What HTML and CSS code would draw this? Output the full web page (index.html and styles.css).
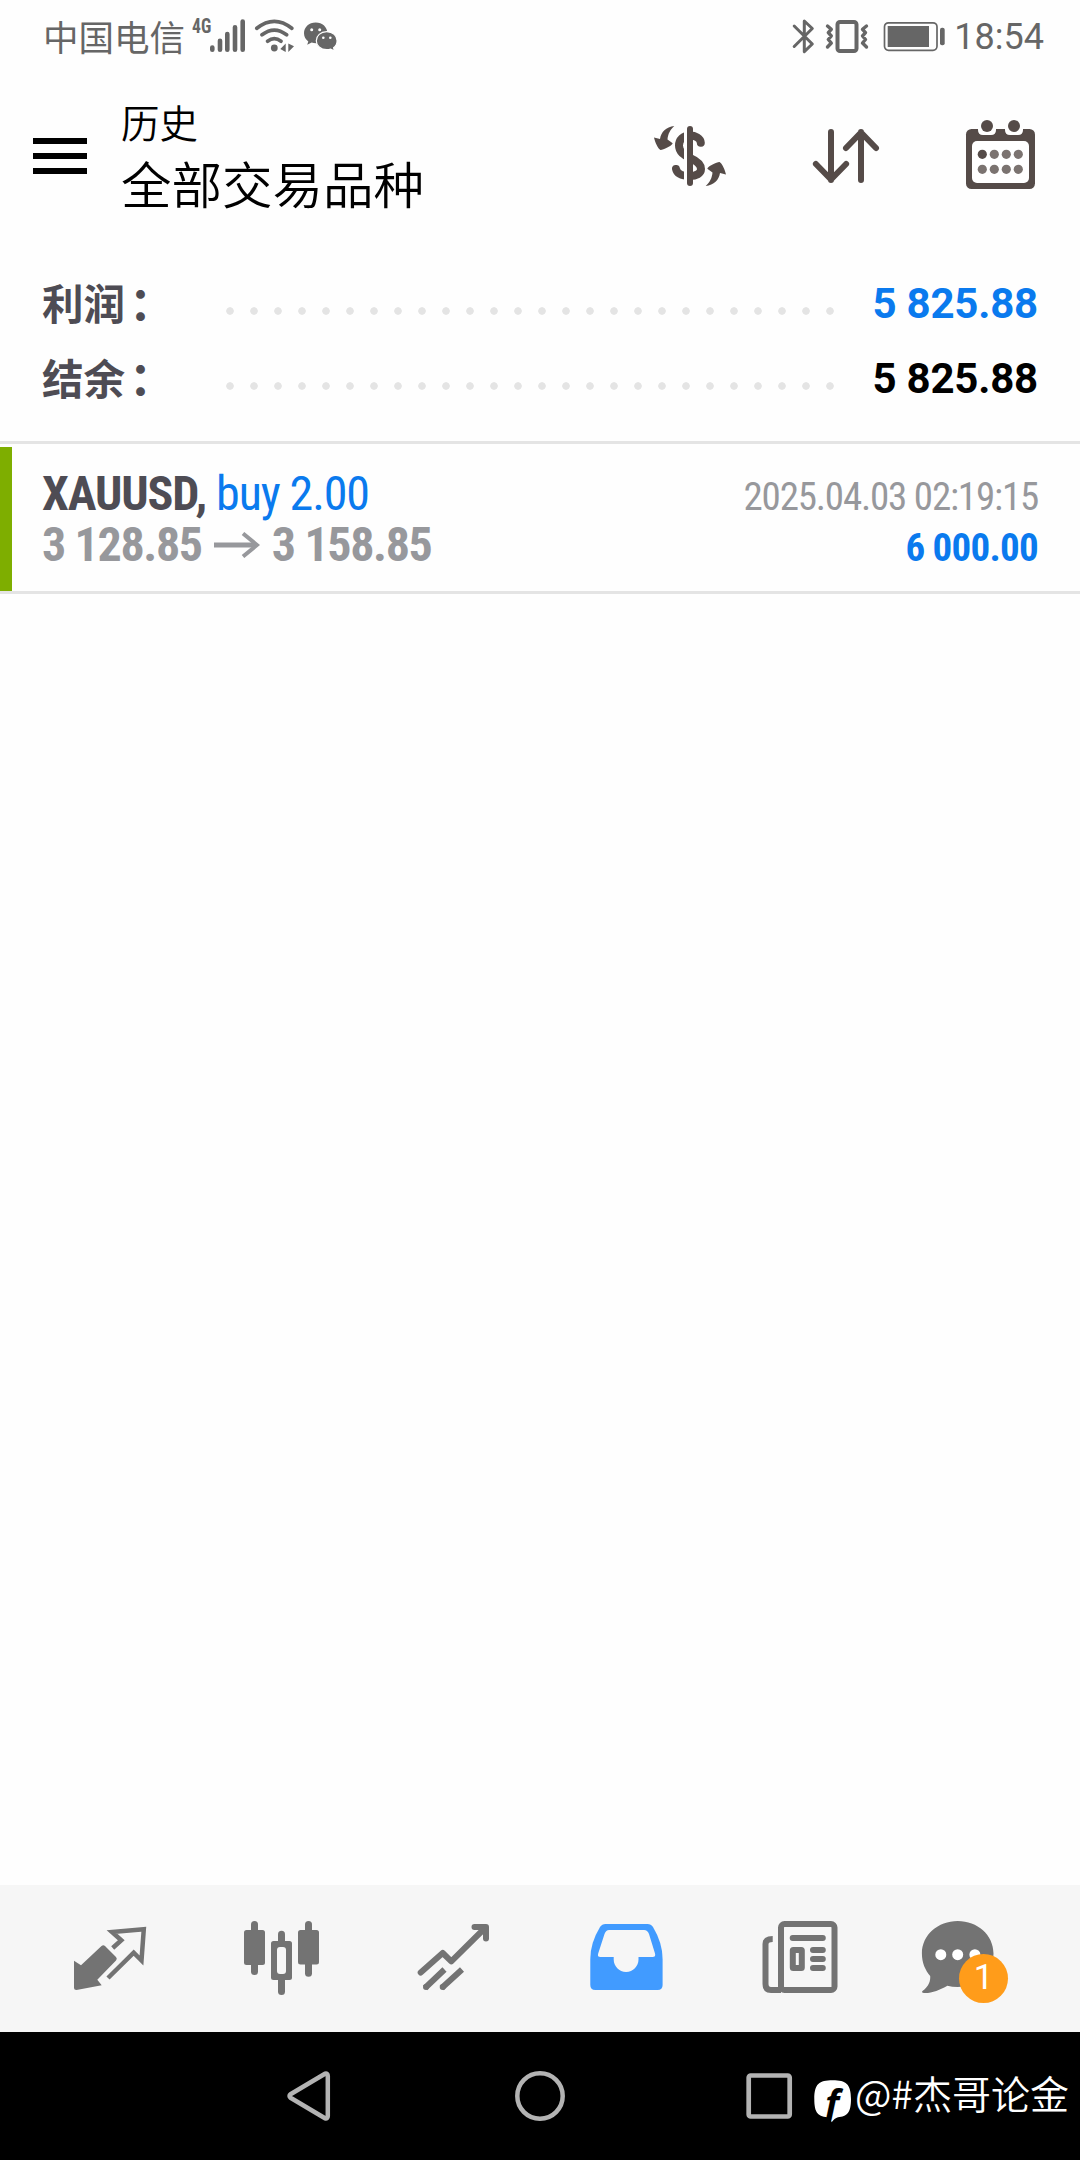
FILE: index.html
```html
<!DOCTYPE html>
<html lang="zh-CN">
<head>
  <meta charset="UTF-8" />
  <meta name="viewport" content="width=device-width, initial-scale=1.0" />
  <title>历史</title>
  <link rel="stylesheet" href="styles.css">
</head>
<body>
  <div class="status-bar">
    <span class="carrier">中国电信</span>
    <span class="network">4G</span>
    <svg class="signal" width="38" height="36" viewBox="0 0 38 36" stroke="#666" stroke-width="4.6" stroke-linecap="round">
      <path d="M4.3 29.5V31.7M12 22.7V31.7M19.3 16V31.7M27 9.3V31.7M34.7 3.5V31.7"/>
    </svg>
    <svg class="wifi" width="44" height="36" viewBox="0 0 44 36" fill="none" stroke="#666" stroke-width="3.7" stroke-linecap="round">
      <path d="M3.8 10.3Q21.3-3.6 38.8 10.3M9 16.8Q21.3 7.4 33.6 16.8M14.6 23.2Q21.3 18.2 28 23.2"/>
      <circle cx="21.3" cy="30" r="3.4" fill="#666" stroke="none"/>
      <path d="M27.3 31L32.7 25.5V34ZM35.3 25.5V34L41 28.3Z" fill="#666" stroke="none"/>
    </svg>
    <svg class="wechat" width="38" height="36" viewBox="0 0 38 36" fill="#666">
      <path d="M13.7 4.6C7 4.6 2 9.3 2 15.2c0 3.5 1.7 6.2 4.3 8.2L5.2 26.8l4.5-2.2c6 2.2 16-.5 15.7-9.4C25.4 9.3 20.4 4.6 13.7 4.6Z"/>
      <path d="M24.7 13.7C18.5 13.7 14.3 17.8 14.3 22.7s4.2 9 10.4 9c1.5 0 2.8-.2 4-.6l3.8 1.9-.9-3.2c2.3-1.8 3.5-4.2 3.5-7.1 0-4.9-4.2-9-10.4-9Z" stroke="#fff" stroke-width="1.2"/>
      <circle cx="9.7" cy="11.7" r="1.5" fill="#fff"/><circle cx="17.7" cy="11.7" r="1.5" fill="#fff"/>
      <circle cx="21.3" cy="19.7" r="1.3" fill="#fff"/><circle cx="28.3" cy="19.7" r="1.3" fill="#fff"/>
    </svg>
    <div class="status-right">
      <svg width="28" height="38" viewBox="0 0 28 38" fill="none" stroke="#666" stroke-width="3" stroke-linejoin="round" stroke-linecap="round">
        <path d="M4.2 9L22.3 27L14.3 34.7V4L22.3 11.5L4.2 29.5"/>
      </svg>
      <svg class="vibrate" width="46" height="38" viewBox="0 0 46 38" fill="none" stroke="#666" stroke-linejoin="round" stroke-linecap="round">
        <rect x="13.5" y="5" width="19" height="29" rx="2.5" stroke-width="4"/>
        <path stroke-width="3.4" d="M3.5 9L7.3 12.3L4.3 15.7L7.3 19L4.3 22.5L7.3 26L3.5 30M42.5 9L38.5 12.3L41.5 15.7L38.5 19L41.5 22.5L38.5 26L42.5 30"/>
      </svg>
      <svg class="battery" width="66" height="38" viewBox="0 0 66 38">
        <rect x="2.5" y="5.8" width="52.5" height="27.5" rx="4" fill="none" stroke="#666" stroke-width="1.7"/>
        <rect x="5.7" y="9" width="41.3" height="21" fill="#666"/>
        <rect x="58" y="10.7" width="4.7" height="17.6" rx="2" fill="#666"/>
      </svg>
      <span class="clock">18:54</span>
    </div>
  </div>

  <header>
    <div class="menu-btn"><i></i><i></i><i></i></div>
    <div class="title">
      <p class="title-small">历史</p>
      <h1>全部交易品种</h1>
    </div>
    <div class="actions">
      <svg width="78" height="72" viewBox="0 0 78 72" fill="#554b48">
        <path d="M49.8 22.8C49.5 18 44 15.5 39 15.5C32 15.5 28 20 28 25.5C28 32 33 35 39 38C46 41 50 44 50 49C50 53.5 45 56 39 56C31 56 26 53.5 25 49" fill="none" stroke="#554b48" stroke-width="8" stroke-linecap="round"/>
        <rect x="33" y="8" width="4" height="56" fill="#fff"/>
        <path d="M39 9V63" stroke="#554b48" stroke-width="6" stroke-linecap="round"/>
        <path id="swap" d="M23.3 6C15 7 10 12 9 19L3 17.5C4 22 7 29 9.500 30C11 30.5 21 26 21.7 23.3L16.5 19.5C17 14 19 10 23.3 6Z"/>
        <use href="#swap" transform="rotate(180 39 36)"/>
      </svg>
      <svg class="sort" width="72" height="72" viewBox="0 0 72 72" fill="none" stroke="#554b48" stroke-width="6" stroke-linecap="round" stroke-linejoin="round">
        <path d="M21 12V60M5.9 44L21 59.5L36.1 44M51 60V12M36 28L51 12.5L66 28"/>
      </svg>
      <svg class="calendar" width="75" height="75" viewBox="0 0 75 75" fill="#554b48">
        <rect x="3" y="12" width="69" height="60" rx="5.5"/>
        <path d="M15 11H33V13Q33 18 28 18H20Q15 18 15 13ZM42 11H60V13Q60 18 55 18H47Q42 18 42 13Z" fill="#fff"/>
        <rect x="9" y="24" width="57" height="42" rx="5" fill="#fff"/>
        <circle cx="24" cy="9" r="6"/><circle cx="51" cy="9" r="6"/>
        <circle cx="19.3" cy="37.3" r="4.6"/>
        <g fill="#7b7370">
          <circle cx="31.3" cy="37.3" r="4.6"/><circle cx="43.3" cy="37.3" r="4.6"/><circle cx="55.3" cy="37.3" r="4.6"/>
          <circle cx="19.3" cy="52.3" r="4.6"/><circle cx="31.3" cy="52.3" r="4.6"/><circle cx="43.3" cy="52.3" r="4.6"/><circle cx="55.3" cy="52.3" r="4.6"/>
        </g>
      </svg>
    </div>
  </header>

  <section class="summary">
    <div class="summary-row">
      <span class="label">利润<span class="colon">：</span></span>
      <span class="dots"></span>
      <span class="value blue">5 825.88</span>
    </div>
    <div class="summary-row">
      <span class="label">结余<span class="colon">：</span></span>
      <span class="dots"></span>
      <span class="value">5 825.88</span>
    </div>
  </section>

  <main>
    <div class="deal">
      <div class="deal-left">
        <div class="line"><b>XAUUSD,</b> <span class="blue">buy 2.00</span></div>
        <div class="line prices">
          <span>3 128.85</span>
          <svg width="46" height="26" viewBox="0 0 46 26" fill="none" stroke="#97989c">
            <path d="M0 13H42" stroke-width="5"/>
            <path d="M29 1.5L43 13L29 24.500" stroke-width="4"/>
          </svg>
          <span>3 158.85</span>
        </div>
      </div>
      <div class="deal-right">
        <div class="line date">2025.04.03 02:19:15</div>
        <div class="line amount blue">6 000.00</div>
      </div>
    </div>
  </main>

  <nav class="tabs">
    <a class="tab">
      <svg width="84" height="84" viewBox="0 0 84 84">
        <path d="M6 44.7L13 49.3L33.5 30Q35.3 28.5 37 30L48 41Q49.6 42.7 48 44.5L29.3 63.7L33.7 69.3L8.5 74Q6 74 6 71.5Z" fill="#737373"/>
        <path d="M44.7 32L53.3 24.3L44 16L75.8 13.2L73.5 44.5L65.7 36.7L40 62" fill="none" stroke="#737373" stroke-width="4.5"/>
      </svg>
    </a>
    <a class="tab">
      <svg width="84" height="84" viewBox="0 0 84 84" fill="#737373">
        <rect x="4" y="14" width="21" height="35" rx="2.5"/><rect x="11" y="5" width="7" height="54" rx="3.5"/>
        <rect x="31" y="25" width="21" height="39" rx="2.5"/><rect x="38" y="14.7" width="7" height="64.3" rx="3.5"/>
        <rect x="37" y="31" width="9" height="27" rx="3" fill="#f6f6f6"/>
        <rect x="58" y="14" width="21" height="34.5" rx="2.5"/><rect x="65" y="5" width="7" height="55.7" rx="3.5"/>
      </svg>
    </a>
    <a class="tab">
      <svg width="84" height="84" viewBox="0 0 84 84" fill="none" stroke="#737373" stroke-width="6" stroke-linejoin="round">
        <path d="M8.7 56.5L30.7 37L39.3 45.3L73 12M62.5 11H74V22.5" stroke-linecap="round"/>
        <path d="M13 72L32.5 53.5M29.7 72L50 53.5"/>
        <path d="M14 71H14M30.7 71H30.7" stroke-linecap="round"/>
      </svg>
    </a>
    <a class="tab">
      <svg width="84" height="84" viewBox="0 0 84 84">
        <path d="M21.5 8H63.5Q67 8 69 11Q78.6 27 78.6 43V69Q78.6 74 73.6 74H11.3Q6.3 74 6.3 69V43Q6.3 27 16 11Q18 8 21.5 8Z" fill="#419bff"/>
        <path d="M25 14H60Q63.5 14 65 18L71 37.5Q72 41 68.5 41H54.5V43.5C54.5 50 49 56 42.1 56S29.7 50 29.7 43.5V41H16.5Q13 41 14.2 37.5L20.5 18Q22 14 25 14Z" fill="#f6f6f6"/>
      </svg>
    </a>
    <a class="tab">
      <svg width="84" height="84" viewBox="0 0 84 84" fill="none" stroke="#737373" stroke-width="6">
        <rect x="25" y="8" width="53.5" height="66" rx="3.5"/>
        <path d="M16.7 23Q9.5 23 9.5 28V68Q9.5 74 15 74H25"/>
        <rect x="36.8" y="34" width="9" height="18" rx=".5"/>
        <path d="M36.7 22H66.8M57 34H66.8M57 43H66.8M57 52H66.8" stroke-linecap="round"/>
      </svg>
    </a>
    <a class="tab chat">
      <svg width="84" height="84" viewBox="0 0 84 84" fill="#737373">
        <path d="M41.7 5C61.5 5 77.5 19 77.5 37.5S61.5 71 41.7 71Q36 71 31.4 69.7C24 74 15 77.5 8 77Q5 76.7 6.5 75C13 70 14.5 65 14.2 60C9 54 5.9 46.5 5.9 37.5C5.9 19 22 5 41.7 5Z"/>
        <circle cx="24.8" cy="38.7" r="5.5" fill="#fff"/><circle cx="41.7" cy="38.7" r="5.5" fill="#fff"/><circle cx="58.9" cy="38.7" r="5.5" fill="#fff"/>
      </svg>
      <span class="badge">1</span>
    </a>
  </nav>

  <div class="system-nav">
    <svg width="60" height="60" viewBox="0 0 60 60" fill="none" stroke="#b3b3b3" stroke-width="4.5" stroke-linejoin="round">
      <path d="M10.5 28.3Q8.5 30 10.5 31.7L45 52.3Q47.8 53 47.8 50V10Q47.8 7 45 7.7Z"/>
    </svg>
    <svg width="60" height="60" viewBox="0 0 60 60" fill="none" stroke="#b3b3b3" stroke-width="4.5">
      <circle cx="30" cy="30" r="22.7"/>
    </svg>
    <svg width="60" height="60" viewBox="0 0 60 60" fill="none" stroke="#b3b3b3" stroke-width="4.7">
      <rect x="8.7" y="9.5" width="41" height="41" rx="2"/>
    </svg>
    <div class="author">
      <svg class="author-logo" width="42" height="50" viewBox="0 0 42 50">
        <path d="M20.7 4.3C34 4.3 39 8 39 23C39 37 35 40.5 26 41.3C23.5 42 21.5 43.5 19.7 46.3L17.5 41.3C6 41 2.3 37 2.3 23C2.3 8 7 4.3 20.7 4.3Z" fill="#fff"/>
        <text class="logo-letter" x="13" y="41">f</text>
      </svg>
      <span>@#杰哥论金</span>
    </div>
  </div>
</body>
</html>
```

FILE: styles.css
```css
* {
  box-sizing: border-box;
}
body {
  margin: 0;
  height: 2160px;
  display: flex;
  flex-direction: column;
  background-color: #fefefe;
  font-family: Roboto, "Noto Sans CJK SC", sans-serif;
  color: #000;
  overflow: hidden;
}
svg {
  display: block;
  flex: none;
}
.status-bar {
  height: 75px;
  padding: 0 36px 3px 43px;
  display: flex;
  align-items: center;
  color: #666;
}
.carrier {
  font-family: "Noto Sans CJK SC", sans-serif;
  font-size: 35.5px;
  line-height: 52px;
  width: 149px;
}
.network {
  width: 16px;
  font-size: 21px;
  font-weight: 700;
  font-stretch: 75%;
  margin-top: -20px;
  transform: scaleX(.84);
  transform-origin: left;
}
.wifi {
  margin-left: 7px;
}
.wechat {
  margin-left: 5px;
}
.status-right {
  margin-left: auto;
  display: flex;
  align-items: center;
}
.vibrate {
  margin-left: 6px;
}
.battery {
  margin-left: 12px;
}
.clock {
  margin-left: 6px;
  padding-top: 2px;
  font-size: 36px;
}
header {
  height: 165px;
  padding: 18px 42px 0 33px;
  display: flex;
}
.menu-btn {
  width: 54px;
  margin-top: 45px;
  display: flex;
  flex-direction: column;
  gap: 9px;
}
.menu-btn i {
  height: 6px;
  background-color: #000;
}
.title {
  margin-left: 34px;
  font-family: "Noto Sans CJK SC", sans-serif;
}
.title p,
.title h1 {
  margin: 0;
  font-weight: 350;
}
.title-small {
  font-size: 38.5px;
  line-height: 56px;
}
.title h1 {
  font-size: 50.5px;
  line-height: 66px;
}
.actions {
  margin-left: auto;
  margin-top: 27px;
  display: flex;
}
.sort {
  margin-left: 81px;
}
.calendar {
  margin: -3px 0 0 81px;
}
.summary {
  height: 201px;
  padding: 26px 42px 0;
}
.summary-row {
  height: 75px;
  display: flex;
  align-items: center;
  font-size: 42px;
  font-weight: 700;
}
.label {
  width: 176px;
  padding-bottom: 4px;
  color: #4e4c54;
  font-family: "Noto Sans CJK SC", sans-serif;
  font-size: 41.5px;
}
.colon {
  margin-left: 4px;
  font-size: 46px;
  line-height: 1;
}
.dots {
  width: 624px;
  height: 24px;
  margin-top: 15px;
  background: radial-gradient(circle, #e4e4e4 3.4px, transparent 4.1px) 0 0 / 24px 24px;
}
.value {
  margin-left: auto;
  letter-spacing: -.2px;
}
.blue {
  color: #0a7aee;
}
main {
  flex: 1;
}
.deal {
  height: 153px;
  padding: 24px 42px 0 0;
  display: flex;
  justify-content: space-between;
  border-top: 3px solid #e4e4e4;
  border-bottom: 3px solid #e4e4e4;
  background: linear-gradient(#7eae00, #7eae00) no-repeat 0 3px / 12px 144px;
  font-stretch: 75%;
}
.deal-left {
  padding-left: 42px;
  font-size: 48px;
  letter-spacing: -1.1px;
}
.line {
  height: 51px;
  line-height: 51px;
  white-space: nowrap;
}
.deal-left b {
  color: #4e4c54;
}
.prices {
  display: flex;
  align-items: center;
  gap: 12px;
  font-weight: 700;
  color: #97989c;
  letter-spacing: -1.35px;
}
.deal-right {
  font-size: 39px;
  text-align: right;
  padding-top: 4px;
}
.date {
  color: #97989c;
  letter-spacing: -1.2px;
}
.amount {
  font-weight: 700;
  letter-spacing: -.75px;
}
.tabs {
  height: 147px;
  padding: 31px 24px 0;
  display: flex;
  background-color: #f6f6f6;
}
.tab {
  width: 172px;
  height: 84px;
  display: flex;
  justify-content: center;
}
.chat {
  position: relative;
  padding-right: 24px;
}
.badge {
  position: absolute;
  left: 75px;
  top: 38px;
  width: 49px;
  height: 49px;
  line-height: 48px;
  border-radius: 50%;
  background-color: #ff9c1a;
  color: #fff;
  font-size: 35px;
  text-align: center;
}
.system-nav {
  height: 128px;
  padding-left: 280px;
  display: flex;
  align-items: center;
  gap: 170px;
  background-color: #000;
}
.author {
  margin-left: -158px;
  display: flex;
  align-items: center;
  gap: 1px;
  color: #fff;
  font-family: "Noto Sans CJK SC", sans-serif;
  font-size: 39px;
  font-weight: 350;
  white-space: nowrap;
}
.author span {
  padding-bottom: 8px;
}
.author-logo {
  margin-top: 10px;
}
.logo-letter {
  font: italic 700 38px "Open Sans", sans-serif;
  fill: #000;
}
```
